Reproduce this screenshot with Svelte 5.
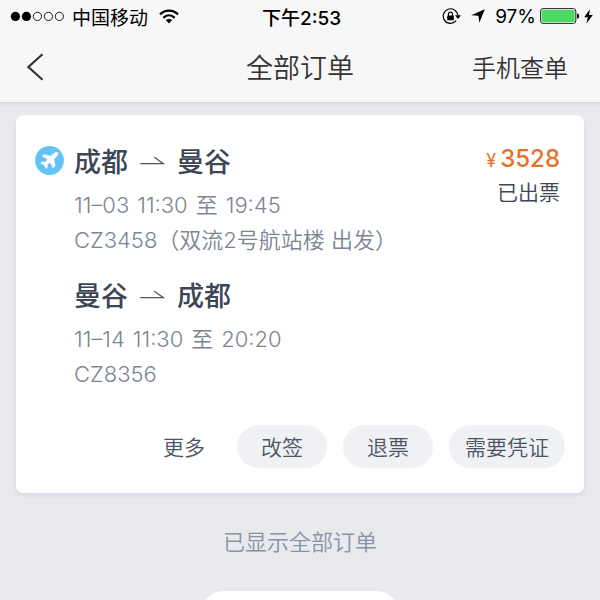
<script lang="ts">
	type Leg = { from: string; to: string; time: string[]; flight: string };

	const legs: Leg[] = [
		{
			from: '成都',
			to: '曼谷',
			time: ['11–03', '11:30', '至', '19:45'],
			flight: 'CZ3458（双流2号航站楼 出发）'
		},
		{ from: '曼谷', to: '成都', time: ['11–14', '11:30', '至', '20:20'], flight: 'CZ8356' }
	];
	const actions = ['改签', '退票', '需要凭证'];
	const signal = [true, true, false, false, false];
</script>

<div class="screen">
	<header>
		<div class="status">
			<div class="carrier">
				<svg class="signal" viewBox="0 0 56 11" aria-hidden="true">
					{#each signal as on, i}
						<circle
							cx={5.5 + i * 11.2}
							cy="5.5"
							r={on ? 4.7 : 4.2}
							fill={on ? '#000' : 'none'}
							stroke={on ? 'none' : '#000'}
							stroke-width="0.9"
						/>
					{/each}
				</svg>
				<span>中国移动</span>
				<svg class="wifi" viewBox="0 0 20 15" aria-hidden="true">
					<g fill="none" stroke="#000" stroke-width="2.3">
						<path d="M1 5.4C6.2 0.4 13.8 0.4 19 5.4" />
						<path d="M4.3 8.8C7.7 5.6 12.3 5.6 15.7 8.8" />
					</g>
					<path d="M6.8 11.1C8.6 9.5 11.4 9.5 13.2 11.1L10 14.4Z" />
				</svg>
			</div>
			<strong>下午2:53</strong>
			<div class="power">
				<svg class="lock" viewBox="0 0 19 17" aria-hidden="true">
					<path
						d="M14.2 12.7A7.3 7.3 0 1 1 15.8 7.5"
						fill="none"
						stroke="#000"
						stroke-width="1.2"
					/>
					<path d="M13 7.3H19L16 11Z" />
					<rect x="5.2" y="7.6" width="6.6" height="4.7" rx="0.5" />
					<path d="M6.5 8V6.1a2 2 0 0 1 4 0V8" fill="none" stroke="#000" stroke-width="1.2" />
				</svg>
				<svg class="locate" viewBox="0 0 14 14" aria-hidden="true">
					<path d="M13.8 0.2L8.3 13.8L7.5 6.8L0.2 6.2Z" />
				</svg>
				<span>97%</span>
				<svg class="battery" viewBox="0 0 40 16" aria-hidden="true">
					<rect x="0.6" y="0.6" width="35.2" height="14.8" rx="2.4" fill="#fff" stroke="#222" />
					<rect x="1.7" y="1.7" width="33" height="12.6" rx="1.4" fill="#4cd964" />
					<path d="M37 5.2C39.8 5.8 39.8 10.2 37 10.8Z" />
				</svg>
				<svg class="bolt" viewBox="0 0 9 15" aria-hidden="true">
					<path d="M5.8 0.2L0.2 8.3H3.8L2.5 14.6L8.8 6.1H5.1Z" />
				</svg>
			</div>
		</div>
		<nav>
			<button class="back" aria-label="返回">
				<svg viewBox="0 0 17 28" aria-hidden="true">
					<path d="M15.5 1.2L1.4 14L15.5 26.8" fill="none" stroke="#333" stroke-width="2.2" />
				</svg>
			</button>
			<h1>全部订单</h1>
			<a href="#lookup">手机查单</a>
		</nav>
	</header>

	<main>
		<article class="card">
			<div class="order">
				<svg class="badge" viewBox="0 0 29 29" role="img" aria-label="机票">
					<circle cx="14.5" cy="14.5" r="14.4" fill="#63c3f8" />
					<path
						d="M22.8 6.6C21.5 5.8 19.5 6.8 18.2 8L15.6 10.2L9 8.4L7.2 10.2L12.6 13.5L9.9 16.2L6.9 15.8L5.7 17.3L9.1 19L11 22.4L12.6 21.3L12.2 18.6L15.1 16.2L18 22L20.2 20L18.9 13.1L21.1 11C22.5 9.6 23.5 7.8 22.8 6.6Z"
						fill="#fff"
						stroke="#fff"
						stroke-width="0.4"
						stroke-linejoin="round"
					/>
				</svg>
				<div class="legs">
					{#each legs as leg}
						<section>
							<h2>
								{leg.from}
								<svg class="arrow" viewBox="0 0 25 14" role="img" aria-label="到">
									<path
										d="M0.3 7.7H23.5L14.3 1.2"
										fill="none"
										stroke="#555"
										stroke-width="1.3"
									/>
								</svg>
								{leg.to}
							</h2>
							<p class="time">
								{#each leg.time as part}
									<span>{part}</span>
								{/each}
							</p>
							<p>{leg.flight}</p>
						</section>
					{/each}
				</div>
				<div class="summary">
					<p class="price"><small>¥</small>3528</p>
					<p>已出票</p>
				</div>
			</div>
			<div class="actions">
				<button class="more">更多</button>
				{#each actions as action}
					<button>{action}</button>
				{/each}
			</div>
		</article>
		<p class="end">已显示全部订单</p>
		<div class="sheet"></div>
	</main>
</div>

<style>
	:global(body) {
		margin: 0;
		background: #e9eaee;
	}

	.screen {
		display: flex;
		flex-direction: column;
		height: 100vh;
		overflow: hidden;
		font-family: Inter, 'Noto Sans CJK SC', sans-serif;
		font-weight: 350;
		color: #3c4654;
	}

	h1,
	h2,
	p {
		margin: 0;
	}

	svg {
		display: block;
		flex: none;
	}

	button {
		padding: 0;
		border: 0;
		background: none;
		font: inherit;
		color: inherit;
	}

	header {
		background: #f7f7f7;
		border-bottom: 1px solid #d5d6d9;
		box-shadow: 0 1px 2px rgb(0 0 0 / 8%);
	}

	.status,
	nav {
		display: grid;
		grid-template-columns: 1fr auto 1fr;
		align-items: center;
	}

	.status {
		height: 32px;
		padding: 0 7px 0 10px;
		font-size: 19px;
		font-weight: 400;
		color: #000;

		& strong {
			font-weight: 500;
		}
	}

	.carrier,
	.power {
		display: flex;
		align-items: center;
	}

	.carrier {
		gap: 7px;
	}

	.power {
		justify-content: flex-end;
	}

	.signal {
		width: 55px;
	}

	.wifi {
		width: 20px;
		margin-left: 4px;
	}

	.lock {
		width: 19px;
		margin-right: 10px;
	}

	.locate {
		width: 14px;
		margin-right: 10px;
	}

	.battery {
		width: 40px;
		margin: 0 4px;
	}

	.bolt {
		width: 9px;
	}

	nav {
		height: 70px;
		padding: 0 27px;

		& h1 {
			padding-bottom: 2px;
			font-size: 27px;
			font-weight: 350;
			color: #333;
		}

		& a {
			justify-self: end;
			padding: 0 5px 2px 0;
			font-size: 24px;
			color: #333;
			text-decoration: none;
		}
	}

	.back {
		justify-self: start;

		& svg {
			width: 17px;
		}
	}

	main {
		display: flex;
		flex: 1;
		flex-direction: column;
		padding: 12px 16px 0;
	}

	.card {
		padding: 28px 19px 25px;
		background: #fff;
		border-radius: 7px;
		box-shadow: 0 2px 4px rgb(60 70 90 / 10%);
	}

	.order {
		display: flex;
		align-items: flex-start;
		padding-right: 5px;
	}

	.badge {
		width: 29px;
		margin: 3px 10px 0 0;
	}

	.legs {
		display: grid;
		flex: 1;
		gap: 19px;

		& h2 {
			display: flex;
			gap: 12px;
			align-items: center;
			margin-bottom: 5px;
			font-size: 27px;
			font-weight: 500;
			line-height: 40px;
		}

		& p {
			font-size: 22px;
			line-height: 35px;
			color: #7d8593;
		}

		& .time {
			display: flex;
			gap: 8px;
		}
	}

	.arrow {
		width: 25px;
	}

	.summary {
		font-size: 21px;
		line-height: 32px;
		text-align: right;
	}

	.price {
		font-size: 24px;
		font-weight: 500;
		color: #e6722a;

		& small {
			margin-right: 4px;
			font-size: 18px;
			font-weight: 400;
		}
	}

	.actions {
		display: flex;
		gap: 16px;
		justify-content: flex-end;
		margin-top: 33px;

		& button {
			height: 43px;
			padding: 0 16px 2px;
			min-width: 90px;
			border-radius: 22px;
			background: #f0f1f5;
			font-size: 21px;
			color: #4b5563;
		}

		& .more {
			min-width: 0;
			background: none;
		}
	}

	.end {
		margin: 32px 0;
		font-size: 22px;
		line-height: 34px;
		text-align: center;
		color: #8a92a3;
	}

	.sheet {
		align-self: center;
		width: 200px;
		height: 60px;
		flex: none;
		border-radius: 24px;
		background: #fff;
	}
</style>
